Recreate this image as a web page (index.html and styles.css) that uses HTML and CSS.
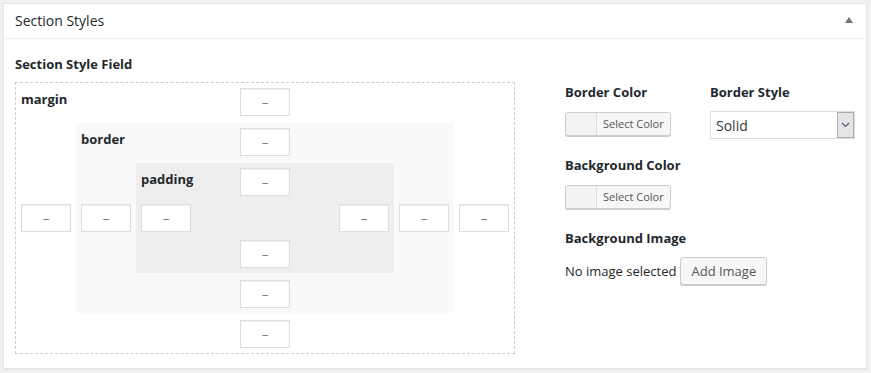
FILE: index.html
```html
<!DOCTYPE html>
<html lang="en">
<head>
  <meta charset="UTF-8">
  <meta name="viewport" content="width=device-width, initial-scale=1.0">
  <title>Section Styles</title>
  <link rel="stylesheet" href="styles.css">
</head>
<body>

<div class="postbox">
  <div class="postbox-header">
    <h2>Section Styles</h2>
    <svg class="toggle" width="8" height="6" viewBox="0 0 8 6"><polygon points="4,0 8,6 0,6" fill="#72777c"/></svg>
  </div>

  <div class="inside">
    <div class="box-field">
      <h3 class="field-title">Section Style Field</h3>

      <div class="layer layer-margin">
        <span class="layer-label">margin</span>
        <input class="side side-top" type="text" placeholder="_">
        <input class="side side-left" type="text" placeholder="_">

        <div class="layer layer-border">
          <span class="layer-label">border</span>
          <input class="side side-top" type="text" placeholder="_">
          <input class="side side-left" type="text" placeholder="_">

          <div class="layer layer-padding">
            <span class="layer-label">padding</span>
            <input class="side side-top" type="text" placeholder="_">
            <input class="side side-left" type="text" placeholder="_">
            <input class="side side-right" type="text" placeholder="_">
            <input class="side side-bottom" type="text" placeholder="_">
          </div>

          <input class="side side-right" type="text" placeholder="_">
          <input class="side side-bottom" type="text" placeholder="_">
        </div>

        <input class="side side-right" type="text" placeholder="_">
        <input class="side side-bottom" type="text" placeholder="_">
      </div>
    </div>

    <div class="style-fields">
      <div class="field">
        <label class="field-label">Border Color</label>
        <div class="control">
          <button class="color-button"><span class="swatch"></span><span class="color-text">Select Color</span></button>
        </div>
      </div>

      <div class="field">
        <label class="field-label">Border Style</label>
        <div class="control">
          <span class="select-wrap">
            <select class="select">
              <option>Solid</option>
              <option>Dashed</option>
              <option>Dotted</option>
            </select>
            <span class="select-arrow">
              <svg width="9" height="6" viewBox="0 0 9 6"><polyline points="1,1 4.5,4.5 8,1" fill="none" stroke="#4a5a7a" stroke-width="1.2"/></svg>
            </span>
          </span>
        </div>
      </div>

      <div class="field field-wide">
        <label class="field-label">Background Color</label>
        <div class="control">
          <button class="color-button"><span class="swatch"></span><span class="color-text">Select Color</span></button>
        </div>
      </div>

      <div class="field field-wide">
        <label class="field-label">Background Image</label>
        <div class="control">
          <span class="no-image">No image selected</span>
          <button class="button">Add Image</button>
        </div>
      </div>
    </div>
  </div>
</div>

</body>
</html>
```

FILE: styles.css
```css
body {
  font-family: "Open Sans", "Noto Sans", sans-serif;
  font-size: 13px;
  color: #23282d;
  background-color: #f1f1f1;
  margin: 0;
  padding: 3px 4px 3px 3px;
}
.postbox {
  background-color: #fff;
  border: 1px solid #e5e5e5;
  box-shadow: 0 1px 1px rgba(0, 0, 0, 0.04);
}
.postbox-header {
  display: flex;
  align-items: center;
  justify-content: space-between;
  height: 34px;
  padding: 0 13px 0 11px;
  border-bottom: 1px solid #eee;
}
.postbox-header h2 {
  margin: 0;
  font-size: 14px;
  font-weight: 400;
  line-height: 20px;
}
.toggle {
  margin-top: -2px;
}
.inside {
  display: flex;
  padding: 15px 11px 14px;
}
.box-field {
  width: 500px;
}
.field-title {
  margin: 0 0 8px;
  font-size: 13px;
  font-weight: 700;
  line-height: 20px;
}
.layer {
  display: grid;
  grid-template-columns: 50px 1fr 50px;
  grid-template-rows: 28px auto 28px;
  gap: 7px 5px;
  padding: 5px;
}
.layer-margin {
  border: 1px dashed #ccc;
}
.layer-border {
  grid-column: 2;
  grid-row: 2;
  background-color: #f9f9f9;
}
.layer-padding {
  grid-column: 2;
  grid-row: 2;
  grid-template-rows: 28px 30px 28px;
  background-color: #eee;
}
.layer-label {
  grid-column: 1;
  grid-row: 1;
  padding-top: 1px;
  font-weight: 700;
  line-height: 20px;
  white-space: nowrap;
}
.side {
  box-sizing: border-box;
  width: 50px;
  height: 28px;
  margin: 0;
  padding: 0 5px 10px;
  border: 1px solid #ddd;
  box-shadow: inset 0 1px 2px rgba(0, 0, 0, 0.07);
  background-color: #fff;
  font-family: inherit;
  font-size: 13px;
  text-align: center;
  color: #32373c;
}
.side::placeholder {
  color: #5d6378;
}
.side-top {
  grid-column: 2;
  grid-row: 1;
  justify-self: center;
}
.side-bottom {
  grid-column: 2;
  grid-row: 3;
  justify-self: center;
}
.side-left {
  grid-column: 1;
  grid-row: 2;
  align-self: center;
}
.side-right {
  grid-column: 3;
  grid-row: 2;
  align-self: center;
}
.style-fields {
  display: grid;
  grid-template-columns: 145px 145px;
  align-content: start;
  margin-left: 50px;
  padding-top: 28px;
}
.field {
  margin-bottom: 16px;
}
.field-wide {
  grid-column: 1 / 3;
}
.field-label {
  display: block;
  margin-bottom: 9px;
  font-weight: 700;
  line-height: 20px;
}
.control {
  display: flex;
  align-items: flex-start;
  height: 28px;
}
.color-button {
  display: flex;
  align-items: stretch;
  box-sizing: border-box;
  height: 24px;
  margin: 1px 0 0;
  padding: 0;
  border: 1px solid #ccc;
  border-radius: 3px;
  background-color: #f7f7f7;
  box-shadow: 0 1px 0 #ccc;
  font-family: inherit;
  color: #555;
  cursor: pointer;
}
.swatch {
  width: 30px;
  border-right: 1px solid #ddd;
  border-radius: 2px 0 0 2px;
  background-color: #f3f3f3;
}
.color-text {
  padding: 0 6px;
  font-size: 11px;
  line-height: 22px;
}
.select-wrap {
  position: relative;
  display: inline-block;
}
.select {
  appearance: none;
  box-sizing: border-box;
  width: 145px;
  height: 28px;
  margin: 0;
  padding: 0 24px 0 5px;
  border: 1px solid #ddd;
  border-radius: 0;
  background-color: #fff;
  font-family: inherit;
  font-size: 14px;
  color: #32373c;
}
.select-arrow {
  position: absolute;
  top: 1px;
  right: 1px;
  display: flex;
  align-items: center;
  justify-content: center;
  box-sizing: border-box;
  width: 17px;
  height: 26px;
  border: 1px solid #adadad;
  background-color: #e5e5e5;
  pointer-events: none;
}
.no-image {
  margin-right: 4px;
  line-height: 28px;
}
.button {
  box-sizing: border-box;
  height: 28px;
  margin: 0;
  padding: 0 10px 1px;
  border: 1px solid #ccc;
  border-radius: 3px;
  background-color: #f7f7f7;
  box-shadow: 0 1px 0 #ccc;
  font-family: inherit;
  font-size: 13px;
  line-height: 26px;
  color: #555;
  cursor: pointer;
}
```
